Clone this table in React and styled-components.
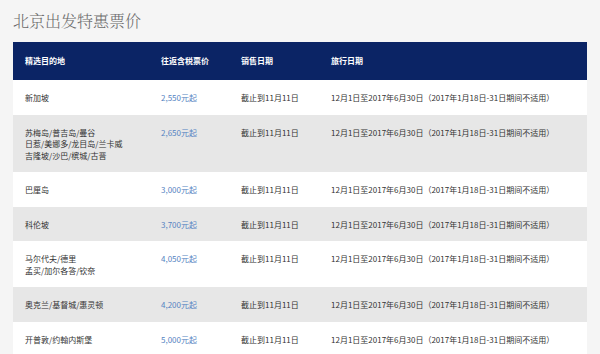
import React from "react";
import styled, { createGlobalStyle } from "styled-components";

const Global = createGlobalStyle`
  html, body { margin: 0; padding: 0; background: #f5f5f5; }
  body { font-family: "Noto Sans CJK SC", "Noto Sans", sans-serif; }
`;

const Page = styled.div`
  width: 600px;
  height: 354px;
  overflow: hidden;
  background: #f5f5f5;
  padding: 0 13px;
  box-sizing: border-box;
`;

const Title = styled.h1`
  margin: 0;
  padding-top: 10px;
  height: 42px;
  box-sizing: border-box;
  font-family: "Noto Serif CJK SC", "Noto Sans CJK SC", serif;
  font-weight: 300;
  font-size: 16px;
  line-height: 21px;
  color: #6a6a6a;
  letter-spacing: 0;
`;

const Table = styled.div`
  display: grid;
  grid-template-columns: 135px 80px 90px 1fr;
  width: 574px;
`;

const HeadCell = styled.div`
  background: #0b2465;
  color: #fff;
  font-weight: 700;
  font-size: 8px;
  height: 38px;
  line-height: 38px;
  padding-left: ${(p) => (p.$first ? "12px" : "13px")};
  white-space: nowrap;
`;

const Cell = styled.div`
  background: ${(p) => (p.$alt ? "#e7e7e7" : "#ffffff")};
  color: ${(p) => (p.$price ? "#5583c2" : "#333")};
  font-size: 8px;
  line-height: 11.5px;
  padding: 12px 0 11px ${(p) => (p.$first ? "12px" : "13px")};
  white-space: nowrap;
  border-bottom: ${(p) => (p.$last ? "2px solid #dcdcdc" : "none")};
`;

const rows = [
  { dest: ["新加坡"], price: "2,550元起" },
  { dest: ["苏梅岛/普吉岛/曼谷", "日惹/美娜多/龙目岛/兰卡威", "吉隆坡/沙巴/槟城/古晋"], price: "2,650元起" },
  { dest: ["巴厘岛"], price: "3,000元起" },
  { dest: ["科伦坡"], price: "3,700元起" },
  { dest: ["马尔代夫/德里", "孟买/加尔各答/钦奈"], price: "4,050元起" },
  { dest: ["奥克兰/基督城/惠灵顿"], price: "4,200元起" },
  { dest: ["开普敦/约翰内斯堡"], price: "5,000元起" },
];

const sale = "截止到11月11日";
const travel = "12月1日至2017年6月30日（2017年1月18日-31日期间不适用）";

export default function App() {
  return (
    <Page>
      <Global />
      <Title>北京出发特惠票价</Title>
      <Table>
        <HeadCell $first>精选目的地</HeadCell>
        <HeadCell>往返含税票价</HeadCell>
        <HeadCell>销售日期</HeadCell>
        <HeadCell>旅行日期</HeadCell>
        {rows.map((r, i) => {
          const alt = i % 2 === 1;
          const last = i === rows.length - 1;
          return (
            <React.Fragment key={i}>
              <Cell $alt={alt} $first $last={last}>
                {r.dest.map((d, j) => (
                  <div key={j}>{d}</div>
                ))}
              </Cell>
              <Cell $alt={alt} $price $last={last}>{r.price}</Cell>
              <Cell $alt={alt} $last={last}>{sale}</Cell>
              <Cell $alt={alt} $last={last}>{travel}</Cell>
            </React.Fragment>
          );
        })}
      </Table>
    </Page>
  );
}
